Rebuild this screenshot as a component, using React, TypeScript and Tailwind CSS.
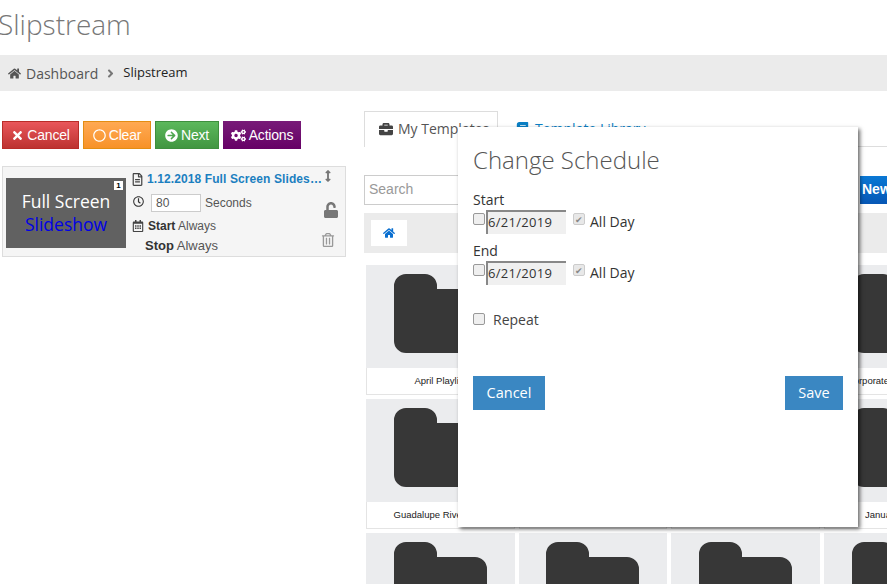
import { FaTimes, FaRegCircle, FaArrowCircleRight, FaCogs, FaRegFileAlt, FaRegClock, FaRegCalendarAlt, FaUnlock, FaRegTrashAlt, FaBriefcase, FaHome, FaAngleRight, FaBook, FaArrowsAltV } from "react-icons/fa";

const sans = "font-['Liberation_Sans',Arial,sans-serif]";
const open = "font-['Open_Sans',sans-serif]";

const folders = [
  ["April Playlist", "", "", "Corporate Presentations"],
  ["Guadalupe River Park", "", "", "January Playlist"],
  ["", "", "", ""],
];

function Folder() {
  return (
    <svg width="93" height="79" viewBox="0 0 93 79" className="block">
      <path
        d="M12 0h19a12 12 0 0 1 12 12v3h38a12 12 0 0 1 12 12v40a12 12 0 0 1-12 12H12A12 12 0 0 1 0 67V12A12 12 0 0 1 12 0z"
        fill="#373737"
      />
    </svg>
  );
}

function ScheduleRow({ label }: { label: string }) {
  return (
    <div className="mb-[5px]">
      <div className="h-[20px] pt-px text-[14px] leading-[20px] text-[#333]">{label}</div>
      <div className="flex h-[26px] items-start pt-px">
        <span className="mt-[3px] h-[12px] w-[12px] rounded-[2px] border border-[#999] bg-[#efefef]" />
        <span className="ml-px flex h-[24px] w-[80px] items-center border-t-2 border-l-2 border-t-[#888] border-l-[#888] bg-[#f0f0f0] text-[13px] tracking-[0.3px] text-[#333]">
          6/21/2019
        </span>
        <span className="mt-[3px] ml-[7px] flex h-[12px] w-[12px] items-center justify-center rounded-[2px] border border-[#ccc] bg-[#e8e8e8] text-[9px] leading-none text-[#888]">
          ✔
        </span>
        <span className="mt-[2px] ml-[5px] text-[14px] leading-[20px] text-[#333]">All Day</span>
      </div>
    </div>
  );
}

export default function App() {
  return (
    <div className={`relative h-[584px] w-[887px] overflow-hidden bg-white ${open}`}>
      <h1 className="ml-[-2px] h-[55px] pt-[5px] text-[28px] leading-[38px] font-light text-[#777]">Slipstream</h1>

      <div className="flex h-[36px] items-center bg-[#ebebeb] pl-[8px] text-[14px] text-[#555]">
        <FaHome className="text-[13px]" />
        <span className="ml-[5px]">Dashboard</span>
        <FaAngleRight className="mx-[6px] text-[13px] text-[#777]" />
        <span className="text-[13px] text-[#222]">Slipstream</span>
      </div>

      <div className="flex">
        <div className="w-[364px] shrink-0 pl-[2px]">
          <div className={`mt-[30px] flex gap-[4px] text-[14px] tracking-[-0.2px] text-white ${sans}`}>
            <button className="flex h-[28px] w-[77px] items-center justify-center gap-[3px] border border-[#b92c28] bg-gradient-to-b from-[#e9565a] to-[#bd3230]">
              <FaTimes className="text-[13px]" /> Cancel
            </button>
            <button className="flex h-[28px] w-[68px] items-center justify-center gap-[3px] border border-[#e38d13] bg-gradient-to-b from-[#ffa952] to-[#f79226]">
              <FaRegCircle className="text-[13px]" /> Clear
            </button>
            <button className="flex h-[28px] w-[64px] items-center justify-center gap-[3px] border border-[#3e8f3e] bg-gradient-to-b from-[#5cb85c] to-[#419641]">
              <FaArrowCircleRight className="text-[13px]" /> Next
            </button>
            <button className="flex h-[28px] w-[78px] items-center justify-center gap-[3px] bg-gradient-to-b from-[#781a78] to-[#660066]">
              <FaCogs className="text-[15px]" /> Actions
            </button>
          </div>

          <div className={`mt-[17px] flex h-[91px] w-[344px] border border-[#ddd] bg-[#f5f5f5] ${sans}`}>
            <div className={`relative mt-[11px] ml-[3px] h-[70px] w-[120px] shrink-0 bg-[#616161] text-center ${open}`}>
              <span className={`absolute top-[3px] right-[3px] h-[9px] w-[9px] bg-white text-[8px] leading-[9px] font-bold text-black ${sans}`}>1</span>
              <div className="pt-[12px] text-[17.5px] leading-[23px] text-white">Full Screen</div>
              <div className="text-[17.5px] leading-[22px] font-medium text-[#0000e6]">Slideshow</div>
            </div>
            <div className="ml-[6px] min-w-0 flex-1 text-[12px] text-[#555]">
              <div className="relative mt-[5px] flex h-[14px] items-center">
                <FaRegFileAlt className="w-[11px] shrink-0 text-[13px] text-[#444]" />
                <span className="ml-[4px] w-[179px] truncate font-bold tracking-[0.1px] text-[#1b7fc0]">
                  1.12.2018 Full Screen Slideshow
                </span>
                <FaArrowsAltV className="absolute top-[-2px] right-[11px] text-[12px] text-[#777]" />
              </div>
              <div className="relative mt-[8px] flex h-[18px] items-center">
                <FaRegClock className="mt-[-3px] ml-px text-[11px] text-[#333]" />
                <span className="ml-[7px] h-[18px] w-[50px] border border-[#ccc] bg-white pl-[4px] text-[12px] leading-[16px]">80</span>
                <span className="ml-[4px]">Seconds</span>
                <FaUnlock className="absolute top-[8px] right-[6px] text-[16px] text-[#777]" />
              </div>
              <div className="relative mt-[4px] flex h-[20px] items-center">
                <FaRegCalendarAlt className="text-[12px] text-[#444]" />
                <span className="ml-[4px]"><b className="text-[#333]">Start</b> Always</span>
                <FaRegTrashAlt className="absolute top-[17px] right-[10px] text-[14px] text-[#999]" />
              </div>
              <div className="ml-[13px] flex h-[19px] items-center text-[13px]">
                <span><b className="text-[#333]">Stop</b> Always</span>
              </div>
            </div>
          </div>
        </div>

        <div className="w-[600px] shrink-0">
          <div className="mt-[20px] flex h-[36px] w-[523px] border-b border-[#ddd] text-[14px]">
            <div className="flex h-[36px] w-[134px] items-center border-x border-t border-[#ddd] bg-white pb-[2px] pl-[14px] text-[#555]">
              <FaBriefcase className="text-[14px] text-[#444]" />
              <span className="ml-[5px]">My Templates</span>
            </div>
            <div className="ml-[18px] flex h-[35px] items-center text-[#0a7fc4]">
              <FaBook className="text-[13px]" />
              <span className="ml-[6px]">Template Library</span>
            </div>
          </div>

          <div className={`mt-[28px] flex h-[30px] w-[523px] items-center justify-between ${sans}`}>
            <div className="flex h-[30px] w-[200px] items-center border border-[#ccc] pb-[2px] pl-[4px] text-[14px] text-[#999]">Search</div>
            <div className="flex h-[28px] w-[27px] items-center overflow-hidden bg-gradient-to-b from-[#0a78d4] to-[#0757b5] pb-[2px] pl-[2px] text-[14px] font-bold text-white">
              New
            </div>
          </div>

          <div className="mt-[8px] flex h-[40px] w-[523px] items-center bg-[#ebebeb] pl-[7px]">
            <div className="flex h-[26px] w-[36px] items-center justify-center bg-white">
              <FaHome className="text-[12px] text-[#0a6fd0]" />
            </div>
          </div>

          <div className="mt-[12px] ml-[2px] grid w-[608px] grid-cols-[repeat(4,148.67px)] gap-[4px]">
            {folders.flat().map((name, i) => (
              <div key={i} className="h-[130px]">
                <div className="flex h-[103px] justify-center bg-[#ebecee] pt-[9px]">
                  <Folder />
                </div>
                <div className={`flex h-[27px] items-center justify-center border-x border-b border-[#e4e4e4] bg-white text-[9.5px] whitespace-nowrap text-[#222] ${sans}`}>
                  {name}
                </div>
              </div>
            ))}
          </div>
        </div>
      </div>

      <div className="absolute top-[127px] left-[458px] flex h-[400px] w-[400px] flex-col bg-white p-[15px] shadow-[2px_2px_4px_rgba(0,0,0,0.6)]">
        <h2 className="mt-[2px] mb-[13px] h-[32px] text-[24px] leading-[32px] font-light text-[#555]">Change Schedule</h2>
        <ScheduleRow label="Start" />
        <ScheduleRow label="End" />
        <div className="mt-[18px] flex h-[20px] items-center text-[14px] text-[#444]">
          <span className="h-[12px] w-[12px] rounded-[2px] border border-[#999] bg-[#efefef]" />
          <span className="ml-[8px]">Repeat</span>
        </div>
        <div className="mt-[47px] flex justify-between text-[14.5px] text-white">
          <button className="h-[34px] w-[72px] bg-[#3a87c2]">Cancel</button>
          <button className="h-[34px] w-[58px] bg-[#3a87c2]">Save</button>
        </div>
      </div>
    </div>
  );
}
